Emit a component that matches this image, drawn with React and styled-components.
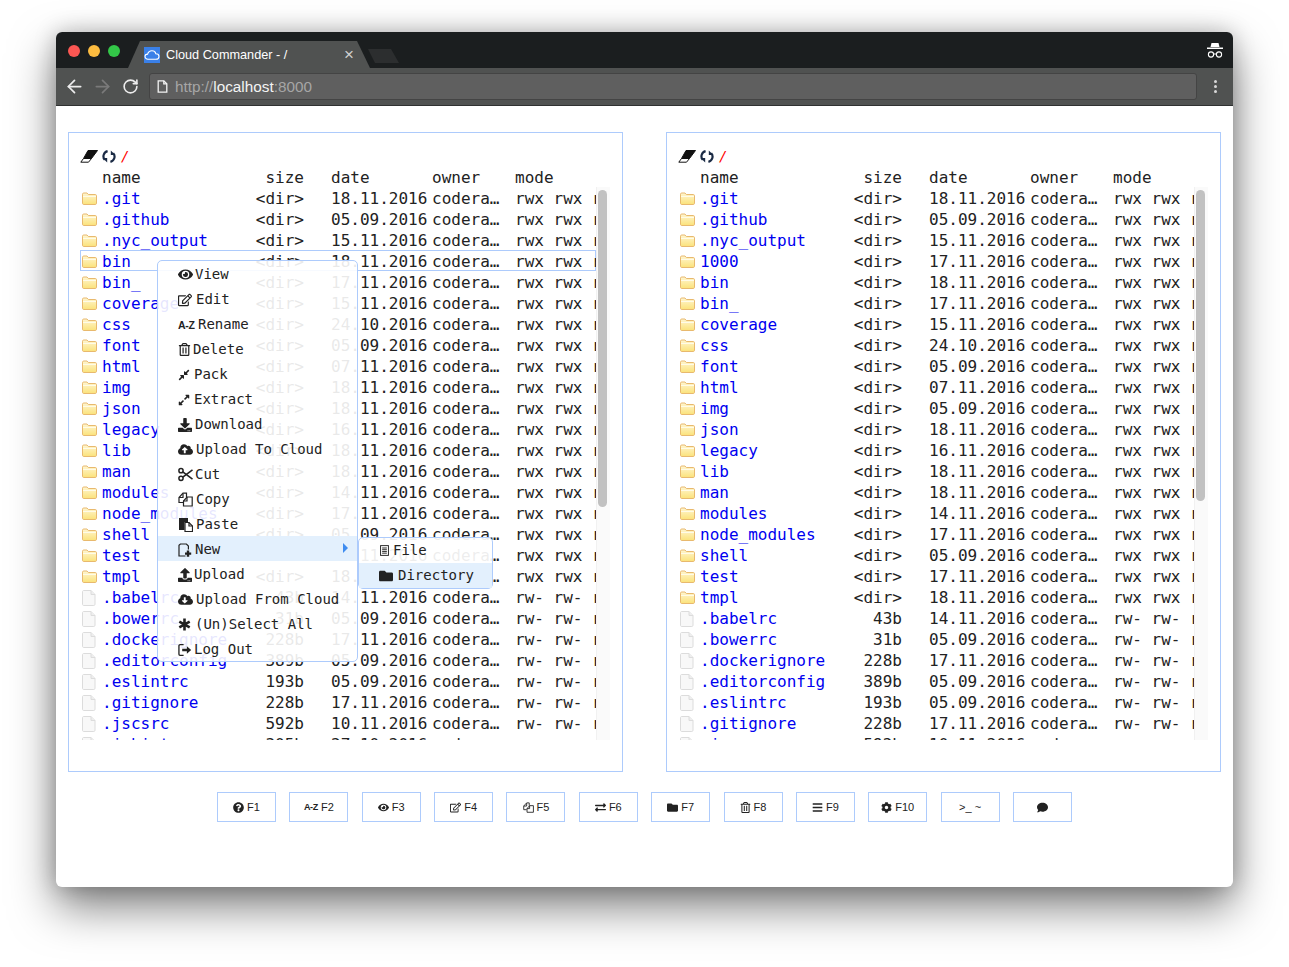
import React from 'react';
import styled, { createGlobalStyle } from 'styled-components';
import {
  FaEye, FaRegEdit, FaRegTrashAlt, FaCompressAlt, FaExpandAlt, FaDownload, FaCloudUploadAlt,
  FaUpload, FaCloudDownloadAlt,
  FaQuestionCircle, FaExchangeAlt, FaFolder, FaBars, FaCog, FaComment,
} from 'react-icons/fa';
import { ArrowLeft, ArrowRight, RotateCw } from 'lucide-react';

const Global = createGlobalStyle`
  html, body { margin: 0; padding: 0; background: #fff; }
  a { color: inherit; }
`;

const Page = styled.div`
  height: 967px; box-sizing: border-box; padding: 32px 56px 80px; overflow: hidden; background: #fff;
`;
const Win = styled.div`
  height: 855px; display: flex; flex-direction: column; border-radius: 6px; background: #fff;
  box-shadow: 0 20px 45px rgba(0,0,0,.5), 0 0 22px rgba(0,0,0,.22);
`;
const TitleBar = styled.div`
  height: 36px; flex: none; display: flex; background: #1b1e1f; border-radius: 6px 6px 0 0; position: relative;
`;
const Lights = styled.div`
  display: flex; gap: 8px; margin: 13px 8px 0 12px;
`;
const Light = styled.span`
  width: 12px; height: 12px; border-radius: 50%; background: ${p => p.$c};
`;
const Tab = styled.div`
  width: 242px; height: 27px; margin-top: 9px; display: flex; align-items: center; box-sizing: border-box;
  padding: 0 16px; background: #505251; color: #fff;
  clip-path: polygon(0 100%, 12px 0, 229px 0, 242px 100%);
  font: 12.7px "Liberation Sans", sans-serif;
`;
const Favicon = styled.svg`
  width: 16px; height: 16px; margin-right: 6px; flex: none;
`;
const TabClose = styled.span`
  margin-left: auto; color: #d0d0d0; font-size: 17px; line-height: 17px;
`;
const NewTab = styled.div`
  width: 31px; height: 14px; margin: 17px 0 0 -2px; background: #2c2e2f;
  clip-path: polygon(0 0, 23px 0, 31px 100%, 7px 100%);
`;
const Incognito = styled.svg`
  width: 18px; height: 18px; position: absolute; right: 9px; top: 10px;
`;
const ToolBar = styled.div`
  height: 38px; flex: none; box-sizing: border-box; display: flex; align-items: center; padding-left: 4px;
  background: #505251; border-bottom: 1px solid #2f3131;
`;
const NavBtn = styled.span`
  width: 28px; height: 28px; display: flex; align-items: center; justify-content: center;
  color: ${p => (p.$off ? '#7a7a7a' : '#ececec')};
`;
const Address = styled.div`
  flex: 1; height: 27px; margin-left: 5px; box-sizing: border-box; display: flex; align-items: center;
  padding-left: 7px; gap: 7px; background: #5f5f5f; border: 1px solid #444; border-radius: 3px;
  font: 15.3px "Liberation Sans", sans-serif; color: #a6a6a6;
`;
const Host = styled.span` color: #f4f4f4; `;
const Kebab = styled.div`
  width: 36px; display: flex; flex-direction: column; align-items: center; gap: 2px;
  & > i { width: 3px; height: 3px; border-radius: 50%; background: #d8d8d8; display: block; }
`;
const Content = styled.div`
  flex: 1; display: flex; flex-direction: column; padding: 26px 12px 0;
`;
const Panels = styled.div`
  display: flex; gap: 43px;
`;
const Panel = styled.section`
  width: 555px; height: 640px; box-sizing: border-box; position: relative; padding: 12px 12px 0 11px;
  border: 1px solid #adcbfc; font: 16px/23px "DejaVu Sans Mono", monospace; color: #222;
`;
const PathLine = styled.div`
  height: 20px; margin-top: 1px; display: flex; align-items: center;
`;
const Eraser = styled.svg`
  width: 18px; height: 13px; margin-right: 4px;
`;
const Refresh = styled.svg`
  width: 14px; height: 15px; margin-right: 5px;
`;
const Slash = styled.span`
  color: #f00; font: italic 14px "DejaVu Sans Mono", monospace;
`;
const gridCols = '22px 150px 79px 101px 83px 81px';
const Header = styled.div`
  display: grid; grid-template-columns: ${gridCols}; height: 21px;
`;
const Body = styled.div`
  display: flex; height: 553px;
`;
const List = styled.div`
  width: 516px; flex: none; overflow: hidden;
`;
const RowBox = styled.div`
  display: grid; grid-template-columns: ${gridCols}; height: 21px; white-space: pre;
  box-shadow: ${p => (p.$selected ? 'inset 0 0 0 1px #adcbfc' : 'none')};
`;
const IconCell = styled.span`
  display: flex; align-items: center; padding-left: 2px;
`;
const Name = styled.span` color: #0000f0; overflow: hidden; `;
const Size = styled.span`
  text-align: right; padding-right: 27px;
`;
const DateCell = styled.span``;
const Owner = styled.span`
  width: 68px; overflow: hidden; text-overflow: ellipsis;
`;
const Mode = styled.span`
  overflow: hidden;
`;
const HeadName = styled.span`
  grid-column: 2;
`;
const HeadSize = styled.span`
  text-align: right; padding-right: 27px;
`;
const Track = styled.div`
  width: 14px; flex: none; background: #fafafa; border-left: 1px solid #f1f1f1; box-sizing: border-box;
  padding: 3px 3px 0 1px;
`;
const Thumb = styled.div`
  height: ${p => p.$h}px; background: #c1c1c1; border-radius: 5px;
`;
const Menu = styled.div`
  position: absolute; left: 88px; top: 127px; width: 201px; box-sizing: border-box;
  background: rgba(255,255,255,.9); border: 1px solid #adcbfc; border-radius: 5px;
  font: 14px/23px "DejaVu Sans Mono", monospace; color: #222;
`;
const MenuRow = styled.div`
  height: 25px; box-sizing: border-box; display: flex; align-items: center; padding: ${p => (p.$sub ? 0 : 2)}px 0 0 20px; position: relative; white-space: pre;
  background: ${p => (p.$active ? '#e3f0fd' : 'transparent')};
`;
const MenuIcon = styled.span`
  width: ${p => p.$w}px; flex: none; display: flex; align-items: center;
  & svg { width: ${p => p.$s || 14}px; height: ${p => p.$s || 14}px; }
`;
const Arrow = styled.span`
  position: absolute; right: 9px; top: 7px; width: 0; height: 0;
  border-left: 5px solid #3f8cf0; border-top: 5px solid transparent; border-bottom: 5px solid transparent;
`;
const SubMenu = styled(Menu)`
  left: 200px; top: 1px; width: 135px; background: rgba(255,255,255,.92);
`;
const AZ = styled.span`
  font: bold ${p => p.$size}px "Liberation Sans", sans-serif; letter-spacing: -.3px; white-space: pre;
`;
const Keys = styled.div`
  display: flex; justify-content: center; gap: 13.36px; margin-top: 20px;
`;
const Key = styled.div`
  width: 59px; height: 30px; box-sizing: border-box; display: flex; align-items: center; justify-content: center; gap: 3px;
  border: 1px solid #adcbfc; color: #222; font: 11px "Liberation Sans", sans-serif;
  & svg { width: 11px; height: 11px; }
`;

const Folder = () => (
  <svg width="15" height="13" viewBox="0 0 15 13">
    <defs>
      <linearGradient id="fg" x1="0" y1="0" x2="0" y2="1">
        <stop offset="0" stopColor="#fff6d2" />
        <stop offset="1" stopColor="#fbe27a" />
      </linearGradient>
    </defs>
    <path d="M.5 2.2C.5 1.5 1 1 1.7 1H5l1.3 1.5h7c.7 0 1.2.5 1.2 1.2v7.6c0 .7-.5 1.2-1.2 1.2H1.7c-.7 0-1.2-.5-1.2-1.2z" fill="url(#fg)" stroke="#e8b96e" />
    <path d="M1 4.5h13" stroke="#fffbe8" />
  </svg>
);
const FilePage = () => (
  <svg width="14" height="16" viewBox="0 0 14 16">
    <path d="M1.5.5H9l4 4v9.8c0 .7-.5 1.2-1.2 1.2H1.7c-.7 0-1.2-.5-1.2-1.2V1.5C.5 1 1 .5 1.5.5z" fill="#f8f8f8" stroke="#dcdcdc" />
    <path d="M9 .5v4h4" fill="#eee" stroke="#dcdcdc" />
  </svg>
);
const NewFile = () => (
  <svg viewBox="0 0 14 14" fill="none" stroke="#222" strokeWidth="1.2">
    <path d="M7.5 13H1V2.2L2.4 1h6l2 2v3.5" />
    <path d="M10 7.5v6.2M7 10.6h6.2" strokeWidth="2.4" />
  </svg>
);
const DocIcon = () => (
  <svg viewBox="0 0 12 14" fill="none" stroke="#222" strokeWidth="1.2">
    <rect x="1" y=".8" width="10" height="12.4" />
    <path d="M3 3.8h6M3 6h6M3 8.2h6M3 10.4h6" />
  </svg>
);
const ScissorsIcon = () => (
  <svg viewBox="0 0 15 14" fill="none" stroke="#222" strokeWidth="1.5">
    <circle cx="3" cy="3.2" r="2.1" />
    <circle cx="3" cy="10.8" r="2.1" />
    <path d="M4.8 4.3 14.5 11.6M4.8 9.7 14.5 2.4" strokeWidth="1.6" />
  </svg>
);
const CopyIcon = () => (
  <svg viewBox="0 0 15 15" fill="none" stroke="#222" strokeWidth="1.2">
    <path d="M5 10.5H1V5.5L5 1.2h3.5V5" />
    <path d="M5 1.5V5.5H1" />
    <path d="M5.5 14V9l3.5-4h5.2v9z" fill="#fff" />
    <path d="M9 5v4H5.5" />
  </svg>
);
const PasteIcon = () => (
  <svg viewBox="0 0 15 15">
    <path d="M1 1h9v4H6.5v8H1z" fill="#222" />
    <path d="M7 5.5h4l3.5 3.5v5.5H7z" fill="#fff" stroke="#222" strokeWidth="1.2" />
    <path d="M11 5.5V9h3.5" fill="none" stroke="#222" strokeWidth="1.2" />
  </svg>
);
const StarIcon = () => (
  <svg viewBox="0 0 14 14" stroke="#222" strokeWidth="2.8" strokeLinecap="butt">
    <path d="M7 .5v13M1.4 3.8l11.2 6.4M12.6 3.8 1.4 10.2" />
  </svg>
);
const LogOutIcon = () => (
  <svg viewBox="0 0 15 14" fill="none" stroke="#222" strokeWidth="1.4">
    <path d="M6 1.2H2.2C1.5 1.2 1 1.7 1 2.4v9.2c0 .7.5 1.2 1.2 1.2H6" />
    <path d="M4.5 5.6h5V3l4.6 4-4.6 4V8.4h-5z" fill="#222" stroke="none" />
  </svg>
);

const dirsL = [
  ['.git', '18'], ['.github', '05.09'], ['.nyc_output', '15'], ['bin', '18'], ['bin_', '17'], ['coverage', '15'],
  ['css', '24.10'], ['font', '05.09'], ['html', '07'], ['img', '18'], ['json', '18'], ['legacy', '16'], ['lib', '18'],
  ['man', '18'], ['modules', '14'], ['node_modules', '17'], ['shell', '05.09'], ['test', '17'], ['tmpl', '18'],
];
const filesL = [
  ['.babelrc', '43b', '14'], ['.bowerrc', '31b', '05.09'], ['.dockerignore', '228b', '17'],
  ['.editorconfig', '389b', '05.09'], ['.eslintrc', '193b', '05.09'], ['.gitignore', '228b', '17'],
  ['.jscsrc', '592b', '10'], ['.jshintrc', '305b', '27.10'],
];
const dirsR = [
  ['.git', '18'], ['.github', '05.09'], ['.nyc_output', '15'], ['1000', '17'], ['bin', '18'], ['bin_', '17'], ['coverage', '15'],
  ['css', '24.10'], ['font', '05.09'], ['html', '07'], ['img', '05.09'], ['json', '18'], ['legacy', '16'], ['lib', '18'],
  ['man', '18'], ['modules', '14'], ['node_modules', '17'], ['shell', '05.09'], ['test', '17'], ['tmpl', '18'],
];
const filesR = [
  ['.babelrc', '43b', '14'], ['.bowerrc', '31b', '05.09'], ['.dockerignore', '228b', '17'],
  ['.editorconfig', '389b', '05.09'], ['.eslintrc', '193b', '05.09'], ['.gitignore', '228b', '17'],
  ['.jscsrc', '592b', '10'],
];
const fullDate = d => (d.length === 2 ? `${d}.11.2016` : `${d}.2016`);

const Row = ({ name, size, date, dir, selected }) => (
  <RowBox $selected={selected}>
    <IconCell>{dir ? <Folder /> : <FilePage />}</IconCell>
    <Name>{name}</Name>
    <Size>{size}</Size>
    <DateCell>{fullDate(date)}</DateCell>
    <Owner>coderaiser</Owner>
    <Mode>{dir ? 'rwx rwx r-x' : 'rw- rw- r--'}</Mode>
  </RowBox>
);

const FilePanel = ({ dirs, files, selected, thumb, children }) => (
  <Panel>
    <PathLine>
      <Eraser viewBox="0 0 18 13">
        <path d="M8 .5h9.5L11.5 8.5H3.5z" fill="#111" stroke="#111" />
        <path d="M3.5 8.5.8 12.2h7.7l3-3.7z" fill="#fff" stroke="#111" />
      </Eraser>
      <Refresh viewBox="0 0 14 14" fill="none" stroke="#1a2a44" strokeWidth="2.2">
        <path d="M5.6 1.6A5.4 5.4 0 0 0 2.8 10.4" />
        <path d="M.6 8.4h4.6v4.6z" fill="#1a2a44" stroke="none" />
        <path d="M8.4 12.4A5.4 5.4 0 0 0 11.2 3.6" />
        <path d="M13.4 5.6H8.8V1z" fill="#1a2a44" stroke="none" />
      </Refresh>
      <Slash>/</Slash>
    </PathLine>
    <Header>
      <HeadName>name</HeadName>
      <HeadSize>size</HeadSize>
      <span>date</span>
      <span>owner</span>
      <span>mode</span>
    </Header>
    <Body>
      <List>
        {dirs.map(([n, d]) => <Row key={n} name={n} size="<dir>" date={d} dir selected={n === selected} />)}
        {files.map(([n, s, d]) => <Row key={n} name={n} size={s} date={d} />)}
      </List>
      <Track><Thumb $h={thumb} /></Track>
    </Body>
    {children}
  </Panel>
);

const items = [
  ['View', 17, 15, <FaEye />],
  ['Edit', 18, 14, <FaRegEdit />],
  ['Rename', 20, 14, <AZ $size={10.5}>A-Z</AZ>],
  ['Delete', 15, 13, <FaRegTrashAlt />],
  ['Pack', 16, 12, <FaCompressAlt />],
  ['Extract', 16, 12, <FaExpandAlt />],
  ['Download', 17, 14, <FaDownload />],
  ['Upload To Cloud', 18, 15, <FaCloudUploadAlt />],
  ['Cut', 17, 15, <ScissorsIcon />],
  ['Copy', 18, 15, <CopyIcon />],
  ['Paste', 18, 15, <PasteIcon />],
  ['New', 17, 14, <NewFile />],
  ['Upload', 16, 14, <FaUpload />],
  ['Upload From Cloud', 18, 15, <FaCloudDownloadAlt />],
  ['(Un)Select All', 17, 13, <StarIcon />],
  ['Log Out', 16, 14, <LogOutIcon />],
];

const keys = [
  [<FaQuestionCircle />, 'F1'], [<AZ $size={9}>A-Z</AZ>, 'F2'], [<FaEye />, 'F3'], [<FaRegEdit />, 'F4'],
  [<CopyIcon />, 'F5'], [<FaExchangeAlt />, 'F6'], [<FaFolder />, 'F7'], [<FaRegTrashAlt />, 'F8'],
  [<FaBars />, 'F9'], [<FaCog />, 'F10'], [null, '>_ ~'], [<FaComment />, ''],
];

export default function App() {
  return (
    <Page>
      <Global />
      <Win>
        <TitleBar>
          <Lights>
            <Light $c="#fc5753" /><Light $c="#fdbc40" /><Light $c="#33c748" />
          </Lights>
          <Tab>
            <Favicon viewBox="0 0 16 16">
              <rect width="16" height="16" fill="#3a80e8" />
              <path d="M4 12.2C2.2 12.2 1 11 1 9.6c0-1.5 1.2-2.5 2.6-2.5C4.2 5 6 3.8 8 3.8c2 0 3.4 1.2 3.8 2.9 1.9 0 3.2 1 3.2 2.7 0 1.6-1.3 2.8-3 2.8z" fill="none" stroke="#fff" strokeWidth="1.1" />
            </Favicon>
            Cloud Commander - /
            <TabClose>×</TabClose>
          </Tab>
          <NewTab />
          <Incognito viewBox="0 0 18 18" fill="#fff">
            <path d="M5.5 1h7l1 4h-9zM1 5.5h16V7H1z" />
            <circle cx="5" cy="12.5" r="2.6" fill="none" stroke="#fff" strokeWidth="1.1" />
            <circle cx="13" cy="12.5" r="2.6" fill="none" stroke="#fff" strokeWidth="1.1" />
            <path d="M7.5 12h3" stroke="#fff" />
          </Incognito>
        </TitleBar>
        <ToolBar>
          <NavBtn><ArrowLeft size={21} strokeWidth={2} /></NavBtn>
          <NavBtn $off><ArrowRight size={21} strokeWidth={2} /></NavBtn>
          <NavBtn><RotateCw size={17} strokeWidth={2.3} /></NavBtn>
          <Address>
            <svg width="11" height="13" viewBox="0 0 11 13" fill="none" stroke="#f4f4f4" strokeWidth="1.3">
              <path d="M1.2.8h5.6l3 3v8.4H1.2z" />
              <path d="M6.8.8v3h3" />
            </svg>
            <span>http://<Host>localhost</Host>:8000</span>
          </Address>
          <Kebab><i /><i /><i /></Kebab>
        </ToolBar>
        <Content>
          <Panels>
            <FilePanel dirs={dirsL} files={filesL} selected="bin" thumb={317}>
              <Menu>
                {items.map(([label, w, s, icon]) => (
                  <MenuRow key={label} $active={label === 'New'}>
                    <MenuIcon $w={w} $s={s}>{icon}</MenuIcon>
                    {label}
                    {label === 'New' && (
                      <>
                        <Arrow />
                        <SubMenu>
                          <MenuRow $sub>
                            <MenuIcon $w={14} $s={11}><DocIcon /></MenuIcon>File
                          </MenuRow>
                          <MenuRow $sub $active>
                            <MenuIcon $w={19} $s={14}><FaFolder /></MenuIcon>Directory
                          </MenuRow>
                        </SubMenu>
                      </>
                    )}
                  </MenuRow>
                ))}
              </Menu>
            </FilePanel>
            <FilePanel dirs={dirsR} files={filesR} thumb={311} />
          </Panels>
          <Keys>
            {keys.map(([icon, label], i) => (
              <Key key={i}>{icon}{label}</Key>
            ))}
          </Keys>
        </Content>
      </Win>
    </Page>
  );
}
